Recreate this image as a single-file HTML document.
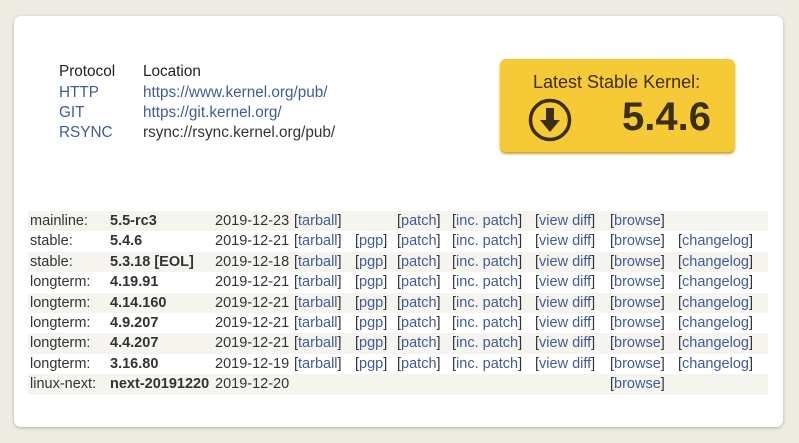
<!DOCTYPE html>
<html><head><meta charset="utf-8"><style>
body{margin:0;width:799px;height:443px;background:#eeebe2;font-family:"Liberation Sans",sans-serif;font-size:14.5px;color:#333;overflow:hidden;position:relative}
.card{position:absolute;left:14px;top:16px;width:769px;height:411px;background:#fff;border-radius:7px;box-shadow:0 1px 3px rgba(0,0,0,.25)}
.a{position:absolute;white-space:nowrap;font-size:15.3px}
a{color:#3e5b9b;text-decoration:none}
.row{position:absolute;left:28px;width:740px;height:20.4px}
.s{background:#f6f4ef}
.row span{position:absolute;top:2px;white-space:nowrap}
b{font-weight:bold}
.box{position:absolute;left:500px;top:59px;width:235px;height:93px;background:#f6ca36;border-radius:6px;box-shadow:0 2px 2px #c9a02a;color:#3b2e12}
</style></head><body>
<div class="card"></div>
<div class="a" style="left:59px;top:63px;color:#222">Protocol</div>
<div class="a" style="left:143px;top:63px;color:#222">Location</div>
<div class="a" style="left:59px;top:84px"><a>HTTP</a></div>
<div class="a" style="left:143px;top:84px"><a>https://www.kernel.org/pub/</a></div>
<div class="a" style="left:59px;top:104px"><a>GIT</a></div>
<div class="a" style="left:143px;top:104px"><a>https://git.kernel.org/</a></div>
<div class="a" style="left:59px;top:124px"><a>RSYNC</a></div>
<div class="a" style="left:143px;top:124px">rsync://rsync.kernel.org/pub/</div>
<div class="box">
<div class="a" style="left:33px;top:13px;font-size:18px">Latest Stable Kernel:</div>
<svg style="position:absolute;left:27px;top:38px" width="46" height="46" viewBox="0 0 46 46"><circle cx="23" cy="23" r="19.5" fill="none" stroke="#3b2e12" stroke-width="3.5"/><path d="M19 11h8v12h6l-10 12-10-12h6z" fill="#3b2e12"/></svg>
<div class="a" style="left:122px;top:36px;font-size:40px;font-weight:bold">5.4.6</div>
</div>
<div class="row s" style="top:211px"><span style="left:2px">mainline:</span><span style="left:82px"><b>5.5-rc3</b></span><span style="left:187px">2019-12-23</span><span style="left:266px">[<a>tarball</a>]</span><span style="left:369px">[<a>patch</a>]</span><span style="left:424px">[<a>inc. patch</a>]</span><span style="left:507px">[<a>view diff</a>]</span><span style="left:582px">[<a>browse</a>]</span></div>
<div class="row" style="top:231.4px"><span style="left:2px">stable:</span><span style="left:82px"><b>5.4.6</b></span><span style="left:187px">2019-12-21</span><span style="left:266px">[<a>tarball</a>]</span><span style="left:327px">[<a>pgp</a>]</span><span style="left:369px">[<a>patch</a>]</span><span style="left:424px">[<a>inc. patch</a>]</span><span style="left:507px">[<a>view diff</a>]</span><span style="left:582px">[<a>browse</a>]</span><span style="left:650px">[<a>changelog</a>]</span></div>
<div class="row s" style="top:251.8px"><span style="left:2px">stable:</span><span style="left:82px"><b>5.3.18 [EOL]</b></span><span style="left:187px">2019-12-18</span><span style="left:266px">[<a>tarball</a>]</span><span style="left:327px">[<a>pgp</a>]</span><span style="left:369px">[<a>patch</a>]</span><span style="left:424px">[<a>inc. patch</a>]</span><span style="left:507px">[<a>view diff</a>]</span><span style="left:582px">[<a>browse</a>]</span><span style="left:650px">[<a>changelog</a>]</span></div>
<div class="row" style="top:272.2px"><span style="left:2px">longterm:</span><span style="left:82px"><b>4.19.91</b></span><span style="left:187px">2019-12-21</span><span style="left:266px">[<a>tarball</a>]</span><span style="left:327px">[<a>pgp</a>]</span><span style="left:369px">[<a>patch</a>]</span><span style="left:424px">[<a>inc. patch</a>]</span><span style="left:507px">[<a>view diff</a>]</span><span style="left:582px">[<a>browse</a>]</span><span style="left:650px">[<a>changelog</a>]</span></div>
<div class="row s" style="top:292.6px"><span style="left:2px">longterm:</span><span style="left:82px"><b>4.14.160</b></span><span style="left:187px">2019-12-21</span><span style="left:266px">[<a>tarball</a>]</span><span style="left:327px">[<a>pgp</a>]</span><span style="left:369px">[<a>patch</a>]</span><span style="left:424px">[<a>inc. patch</a>]</span><span style="left:507px">[<a>view diff</a>]</span><span style="left:582px">[<a>browse</a>]</span><span style="left:650px">[<a>changelog</a>]</span></div>
<div class="row" style="top:313px"><span style="left:2px">longterm:</span><span style="left:82px"><b>4.9.207</b></span><span style="left:187px">2019-12-21</span><span style="left:266px">[<a>tarball</a>]</span><span style="left:327px">[<a>pgp</a>]</span><span style="left:369px">[<a>patch</a>]</span><span style="left:424px">[<a>inc. patch</a>]</span><span style="left:507px">[<a>view diff</a>]</span><span style="left:582px">[<a>browse</a>]</span><span style="left:650px">[<a>changelog</a>]</span></div>
<div class="row s" style="top:333.4px"><span style="left:2px">longterm:</span><span style="left:82px"><b>4.4.207</b></span><span style="left:187px">2019-12-21</span><span style="left:266px">[<a>tarball</a>]</span><span style="left:327px">[<a>pgp</a>]</span><span style="left:369px">[<a>patch</a>]</span><span style="left:424px">[<a>inc. patch</a>]</span><span style="left:507px">[<a>view diff</a>]</span><span style="left:582px">[<a>browse</a>]</span><span style="left:650px">[<a>changelog</a>]</span></div>
<div class="row" style="top:353.8px"><span style="left:2px">longterm:</span><span style="left:82px"><b>3.16.80</b></span><span style="left:187px">2019-12-19</span><span style="left:266px">[<a>tarball</a>]</span><span style="left:327px">[<a>pgp</a>]</span><span style="left:369px">[<a>patch</a>]</span><span style="left:424px">[<a>inc. patch</a>]</span><span style="left:507px">[<a>view diff</a>]</span><span style="left:582px">[<a>browse</a>]</span><span style="left:650px">[<a>changelog</a>]</span></div>
<div class="row s" style="top:374.2px"><span style="left:2px">linux-next:</span><span style="left:82px"><b>next-20191220</b></span><span style="left:187px">2019-12-20</span><span style="left:582px">[<a>browse</a>]</span></div>
</body></html>
